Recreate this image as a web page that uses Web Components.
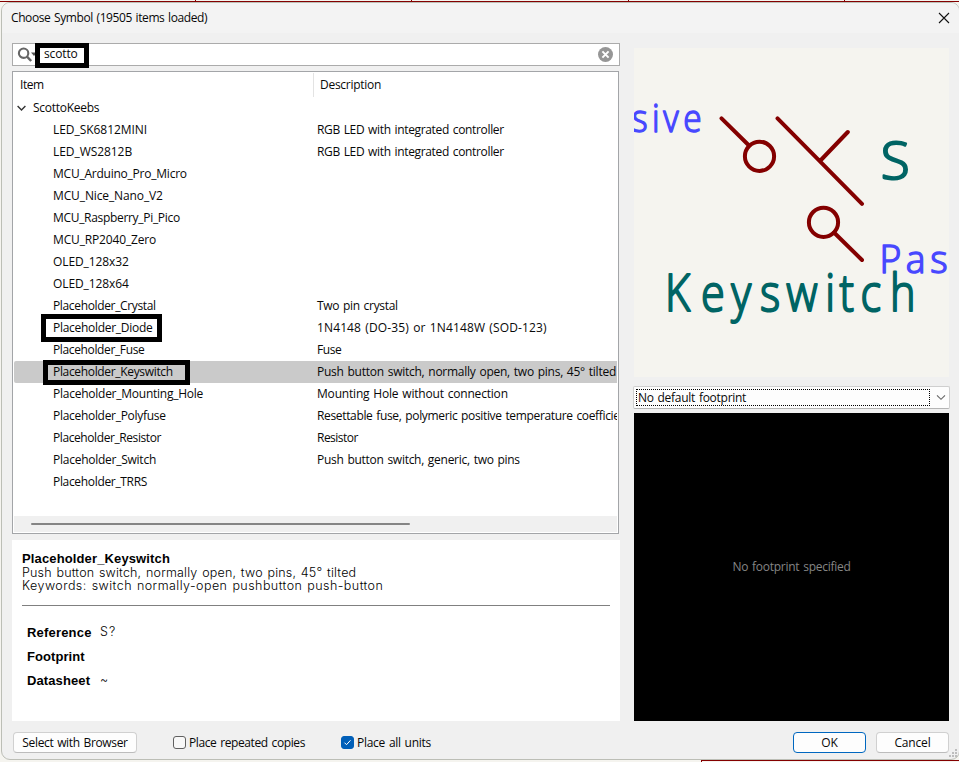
<!DOCTYPE html>
<html lang="en">
<head>
<meta charset="utf-8">
<title>Choose Symbol</title>
<style>
html,body{margin:0;padding:0;width:959px;height:762px;overflow:hidden}
body{font:12px/16px "Open Sans","Noto Sans",sans-serif;color:#080808;background:#f5f4ef}
</style>
</head>
<body>
<symbol-chooser></symbol-chooser>
<script>
function define(name, html, setup) {
  const template = document.createElement('template');
  template.innerHTML = html;
  customElements.define(name, class extends HTMLElement {
    connectedCallback() {
      if (this.shadowRoot) return;
      this.attachShadow({mode: 'open'}).append(template.content.cloneNode(true));
      if (setup) setup.call(this, this.shadowRoot);
    }
  });
}

/* A single line of text tracked to a given advance width. */
customElements.define('ui-text', class extends HTMLElement {
  connectedCallback() {
    if (this.shadowRoot) return;
    this.attachShadow({mode: 'open'}).innerHTML =
      '<style>:host{display:block;white-space:pre;flex:none}span{display:inline-block;word-spacing:1px}</style><span><slot></slot></span>';
    const want = parseFloat(this.getAttribute('w')) - 0.4;
    const span = this.shadowRoot.querySelector('span');
    const n = this.textContent.length;
    if (want && n) {
      const have = span.getBoundingClientRect().width;
      span.style.letterSpacing = ((want - have) / n).toFixed(3) + 'px';
    }
  }
});

define('title-bar', `<style>
:host{display:flex;height:30px;box-sizing:border-box;background:#f3f3f3;justify-content:space-between;align-items:center;padding:0 9px 0 9px;border-radius:8px 8px 0 0}
svg{display:block;margin-bottom:1px}</style>
<ui-text w="196.5">Choose Symbol (19505 items loaded)</ui-text>
<svg width="12" height="12" viewBox="0 0 12 12"><path d="M1 1l10 10M11 1L1 11" stroke="#111" stroke-width="1.1" fill="none"/></svg>`);

define('search-field', `<style>
:host{display:flex;box-sizing:border-box;height:23px;border:1px solid #ababab;background:#fff;align-items:center;padding:0 6px 0 4px}
svg{display:block;flex:none}ui-text{margin:-1px auto 0 8px}</style>
<svg width="19" height="16" viewBox="0 0 19 16"><circle cx="6.6" cy="6.2" r="4.7" fill="none" stroke="#666" stroke-width="2.1"/><path d="M10 9.6l4.2 4.4" stroke="#666" stroke-width="2.4"/><path d="M14 5.5h6l-3 3.5z" fill="#555"/></svg>
<ui-text w="34">scotto</ui-text>
<svg width="15" height="15" viewBox="0 0 15 15"><circle cx="7.5" cy="7.5" r="7.5" fill="#969696"/><path d="M4.4 4.4l6.2 6.2M10.6 4.4l-6.2 6.2" stroke="#fff" stroke-width="2"/></svg>`);

define('tree-row', `<style>
:host{display:grid;grid-template-columns:264px 1fr;height:22px;box-sizing:border-box;align-items:center;padding-left:39px;overflow:hidden;border-radius:2px 0 0 2px}
:host([selected]){background:#cacaca}</style>
<slot></slot><slot name="desc"></slot>`);

define('tree-view', `<style>
:host{display:flex;flex-direction:column;box-sizing:border-box;width:607px;height:463px;border:1px solid #a3a5a8;background:#fff;padding:0 1px 1px}
header{display:grid;grid-template-columns:293px 1fr;height:25px;align-items:center;padding-left:6px;flex:none}
.col{box-sizing:border-box;height:24px;display:flex;align-items:center;border-left:1px solid #e3e3e3;padding:1px 0 0 6px}
.root{display:flex;height:22px;align-items:center;gap:7px;padding-left:3px;flex:none}
.rows{flex:1}
.scroll{height:16px;background:#f0f0f0;box-sizing:border-box;padding:7px 0 0 17px;flex:none}
.thumb{width:379px;height:2px;background:#858585;border-radius:1px}
svg{display:block}</style>
<header><ui-text w="24">Item</ui-text><div class="col"><ui-text w="61.5">Description</ui-text></div></header>
<div class="root"><svg width="9" height="8" viewBox="0 0 9 8"><path d="M.6 2l3.9 4 3.9-4" fill="none" stroke="#333" stroke-width="1.4"/></svg><ui-text w="66.7">ScottoKeebs</ui-text></div>
<div class="rows"></div><div class="scroll"><div class="thumb"></div></div>`, function (root) {
  const rgb = ['RGB LED with integrated controller', 187.2];
  const items = [
    ['LED_SK6812MINI', 94.5, ...rgb], ['LED_WS2812B', 79.5, ...rgb],
    ['MCU_Arduino_Pro_Micro', 134.2], ['MCU_Nice_Nano_V2', 110.2],
    ['MCU_Raspberry_Pi_Pico', 127.2], ['MCU_RP2040_Zero', 103.5],
    ['OLED_128x32', 76.2], ['OLED_128x64', 76.2],
    ['Placeholder_Crystal', 103.2, 'Two pin crystal', 81.2],
    ['Placeholder_Diode', 99.8, '1N4148 (DO-35) or 1N4148W (SOD-123)', 230],
    ['Placeholder_Fuse', 91.8, 'Fuse', 24.8],
    ['Placeholder_Keyswitch', 120.2, 'Push button switch, normally open, two pins, 45° tilted', 299.4],
    ['Placeholder_Mounting_Hole', 150.5, 'Mounting Hole without connection', 191.2],
    ['Placeholder_Polyfuse', 113, 'Resettable fuse, polymeric positive temperature coefficient', 314],
    ['Placeholder_Resistor', 108.4, 'Resistor', 41.2],
    ['Placeholder_Switch', 103.4, 'Push button switch, generic, two pins', 203.2],
    ['Placeholder_TRRS', 94.4]];
  root.querySelector('.rows').innerHTML = items.map(([name, w, desc, dw], i) =>
    `<tree-row${i === 11 ? ' selected' : ''}><ui-text w="${w}">${name}</ui-text>` +
    (desc ? `<ui-text slot="desc" w="${dw}">${desc}</ui-text>` : '') + '</tree-row>').join('');
});

define('symbol-details', `<style>
:host{display:flex;flex-direction:column;box-sizing:border-box;height:181px;background:#fff;padding:11px 10px 0;font:13px/13px "Liberation Sans",Arial,sans-serif;color:#000}
b,.name{font-weight:bold}.name{line-height:15px}
.thin{font:300 12.5px/13px Inter,"Liberation Sans",sans-serif}
hr{width:588px;margin:13px 0 0;border:0;height:1px;background:#808080}
.fields{display:grid;grid-template-columns:73px 1fr;grid-auto-rows:24px;align-items:center;padding:14px 0 0 5px}
.fields .thin{margin-top:-2px}</style>
<ui-text class="name" w="148.4">Placeholder_Keyswitch</ui-text>
<ui-text class="thin" w="334.7">Push button switch, normally open, two pins, 45° tilted</ui-text>
<ui-text class="thin" w="361.7">Keywords: switch normally-open pushbutton push-button</ui-text>
<hr>
<div class="fields">
<b><ui-text w="65">Reference</ui-text></b><ui-text class="thin" w="17">S?</ui-text>
<b><ui-text w="58">Footprint</ui-text></b><span></span>
<b><ui-text w="63.5">Datasheet</ui-text></b><ui-text class="thin" w="10">~</ui-text>
</div>`);

define('symbol-preview', `<style>
:host{display:block;width:315px;height:329px;background:#f5f4ef;overflow:hidden}
svg{display:block}
text{font-family:"Open Sans","Noto Sans",sans-serif;font-weight:300;stroke-linejoin:round}
.pin{fill:#4848ff;stroke:#4848ff;stroke-width:1.5;font-size:38px}
.field{fill:#006464;stroke:#006464;stroke-width:2.1;font-size:51.5px}</style>
<svg width="315" height="329" viewBox="634 48 315 329">
<g fill="none" stroke="#840000" stroke-width="4" stroke-linecap="round">
<path d="M721.5 118.3L749 145.5M777.5 118.3L862 203.8M820 161L847.8 132M834 232.5L862 260"/>
<circle cx="759.5" cy="156.3" r="14.6"/><circle cx="823.5" cy="222.3" r="14.6"/></g>
</svg>`, function (root) {
  const svg = root.querySelector('svg');
  /* [class, text, baseline, horizontal scale, origin of each glyph] */
  const labels = [
    ['pin', 'sive', 131.6, .88, [632, 652, 663.3, 683.2]],
    ['pin', 'Pas', 272.8, .98, [879.5, 905.8, 930.3]],
    ['field', 'S', 178.8, 1.03, [880.7]],
    ['field', 'Keyswitch', 311.4, .84, [665, 701, 731.3, 760, 786.3, 825.2, 839.5, 860.5, 890]]];
  for (const [cls, str, y, s, xs] of labels) {
    const t = document.createElementNS('http://www.w3.org/2000/svg', 'text');
    t.setAttribute('class', cls);
    t.setAttribute('y', y);
    t.setAttribute('transform', `scale(${s} 1)`);
    t.setAttribute('x', xs.map(x => (x / s).toFixed(2)).join(' '));
    t.textContent = str;
    svg.append(t);
  }
});

define('footprint-select', `<style>
:host{display:flex;box-sizing:border-box;width:317px;height:23px;margin-left:-1px;border:1px solid #cfcfcf;border-bottom-color:#b5b5b5;border-radius:2px;background:#fdfdfd;padding:2px 3px 2px 2px;justify-content:space-between;align-items:center}
.focus{box-sizing:border-box;width:294px;height:17px;border:1px dotted #000;display:flex;align-items:center;padding-left:1px}
svg{display:block}</style>
<div class="focus"><ui-text w="108.5">No default footprint</ui-text></div>
<svg width="10" height="7" viewBox="0 0 10 7"><path d="M1 1.3l4 4 4-4" fill="none" stroke="#666" stroke-width="1.1"/></svg>`);

define('footprint-preview', `<style>
:host{display:flex;width:315px;height:308px;background:#000;color:#858585;align-items:center;justify-content:center}</style>
<ui-text w="118.5">No footprint specified</ui-text>`);

define('push-button', `<style>
:host{display:flex;box-sizing:border-box;height:21px;border:1px solid #d0d0d0;border-bottom-color:#bcbcbc;border-radius:4px;background:#fdfdfd;align-items:center;justify-content:center}
:host([primary]){border-color:#0067c0}</style><slot></slot>`);

define('check-box', `<style>
:host{display:flex;align-items:center;gap:3px}
i{box-sizing:border-box;width:13px;height:13px;border:1px solid #606060;border-radius:3px;background:#f8f8f8;display:block}
svg{display:none}
:host([checked]) i{background:#005fb8;border-color:#005fb8}
:host([checked]) svg{display:block}</style>
<i><svg width="11" height="11" viewBox="0 0 11 11"><path d="M2.5 5.7l2 2 4-4.4" fill="none" stroke="#fff" stroke-width="1"/></svg></i><slot></slot>`);

define('marker-box', `<style>
:host{position:absolute;box-sizing:border-box;border:5px solid #000;left:var(--x);top:var(--y);width:var(--w);height:var(--h)}</style>`);

define('symbol-chooser', `<style>
:host{display:block;position:relative;width:959px;height:762px;background:#f5f4ef}
.sheet{position:absolute;left:0;top:0}
.window{position:absolute;left:1px;top:2px;width:959px;height:758px;box-sizing:border-box;border:1px solid #bcbeb6;border-radius:9px;background:#f0f0f0;display:flex;flex-direction:column}
.main{display:grid;grid-template-columns:608px 315px;column-gap:14px;padding:10px 0 0 10px;height:688px;box-sizing:border-box}
.left{display:flex;flex-direction:column}
tree-view{margin:5px 0 6px}
.right{display:flex;flex-direction:column;padding-top:5px}
footprint-select{margin-top:9px;margin-bottom:4px}
footer{display:flex;align-items:center;padding:0 10px 0 11px;height:21px;margin-top:11px}
.a{width:124px}.b{margin-left:36px;width:132px}.c{margin-left:36px;margin-right:auto}.d{width:73px;margin-right:10px}.e{width:73px}
.grip{position:absolute;right:0;bottom:0}</style>
<svg class="sheet" width="959" height="762"><path d="M0 1.5H959M195.5 0V2M411.5 0V2M628.5 0V2M844.5 0V2M701 760.5H959M701.5 759V762" stroke="#840000" fill="none"/></svg>
<div class="window">
<title-bar></title-bar>
<div class="main">
<div class="left"><search-field></search-field><tree-view></tree-view><symbol-details></symbol-details></div>
<div class="right"><symbol-preview></symbol-preview><footprint-select></footprint-select><footprint-preview></footprint-preview></div>
</div>
<footer>
<push-button class="a"><ui-text w="105.7">Select with Browser</ui-text></push-button>
<check-box class="b"><ui-text w="116.4">Place repeated copies</ui-text></check-box>
<check-box class="c" checked><ui-text w="74.4">Place all units</ui-text></check-box>
<push-button class="d" primary><ui-text w="17">OK</ui-text></push-button>
<push-button class="e"><ui-text w="36.5">Cancel</ui-text></push-button>
</footer>
<svg class="grip" width="11" height="11" viewBox="0 0 11 11"><path d="M7 1h2v2H7zM4 4h2v2H4zM7 4h2v2H7zM1 7h2v2H1zM4 7h2v2H4zM7 7h2v2H7z" fill="#bdbdbd"/></svg>
</div>
<marker-box style="--x:35px;--y:43px;--w:54px;--h:25px"></marker-box>
<marker-box style="--x:41px;--y:314px;--w:121px;--h:28px"></marker-box>
<marker-box style="--x:43px;--y:360px;--w:147px;--h:25px"></marker-box>`);
</script>
</body>
</html>
